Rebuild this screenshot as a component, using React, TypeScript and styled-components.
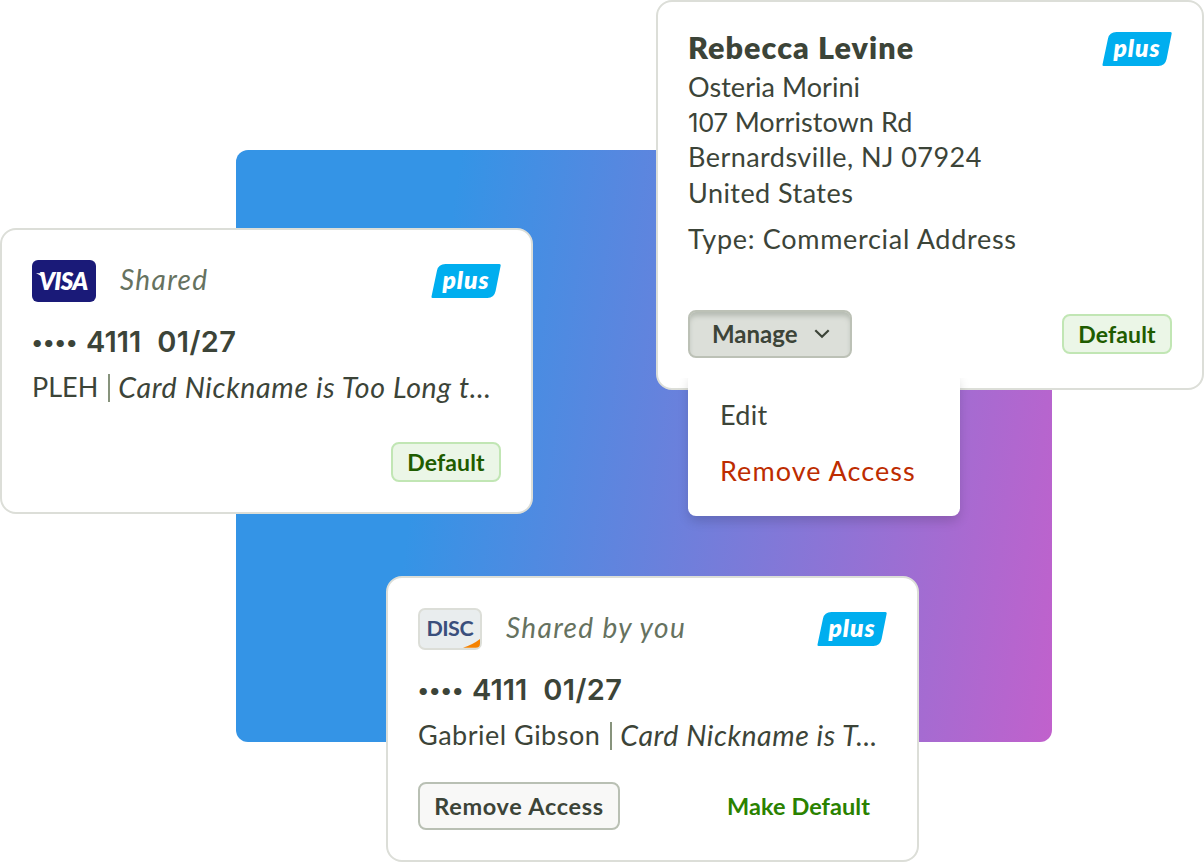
import { ReactNode } from 'react';
import styled, { createGlobalStyle } from 'styled-components';

function PlusBadge() {
  return (
    <BadgeSvg width="70" height="34" viewBox="0 0 70 34">
      <path
        d="M14.5 0H68.4Q70 0 69.7 1.6L64.6 27Q63.1 34 56.5 34H1.7Q.2 34 .5 32.4L6 6.6Q7.4 0 14.5 0Z"
        fill="#00aeef"
      />
      <text x="11.4" y="25" fill="#ffffff" fontSize="24.5" fontStyle="italic" fontWeight="800" letterSpacing="1">
        plus
      </text>
    </BadgeSvg>
  );
}

function VisaLogo() {
  return (
    <svg width="64" height="42" viewBox="0 0 64 42">
      <rect width="64" height="42" rx="6" fill="#1a1a78" />
      <path d="M4 13.2H9Q11.8 13.3 12.4 16.5L13 20Q9.5 15.2 4 13.2Z" fill="#ffffff" />
      <text x="7" y="30.3" fill="#ffffff" fontSize="24" fontStyle="italic" fontWeight="800" letterSpacing="-0.7">
        VISA
      </text>
    </svg>
  );
}

function DiscoverLogo() {
  return (
    <svg width="64" height="42" viewBox="0 0 64 42">
      <rect x="1" y="1" width="62" height="40" rx="6" fill="#e9edee" stroke="#dcded8" strokeWidth="2" />
      <path d="M45 39.8Q55 36.5 62 31V35.5Q62 39.8 57.5 39.8Z" fill="#f58200" />
      <text x="8.4" y="28" fill="#3a4f7c" fontSize="21.5" fontWeight="700" letterSpacing="-0.5">
        DISC
      </text>
    </svg>
  );
}

type PaymentCardProps = {
  logo: ReactNode;
  shared: string;
  owner: ReactNode;
  nickname: ReactNode;
  children: ReactNode;
};

function PaymentCard({ logo, shared, owner, nickname, children }: PaymentCardProps) {
  return (
    <Card>
      <CardHead>
        {logo}
        <SharedText>{shared}</SharedText>
        <PlusBadge />
      </CardHead>
      <CardNumber>
        <Dots>••••</Dots>
        <span>4111</span>
        <Expiry>01/27</Expiry>
      </CardNumber>
      <CardOwner>
        {owner}
        <Divider />
        {nickname}
      </CardOwner>
      <CardFoot>{children}</CardFoot>
    </Card>
  );
}

function AddressCard() {
  return (
    <Card>
      <AddressHead>
        <Name>Rebecca Levine</Name>
        <PlusBadge />
      </AddressHead>
      <AddressLine $spacing={0.05}>Osteria Morini</AddressLine>
      <AddressLine $spacing={0.05}>
        <Digits>107</Digits> Morristown Rd
      </AddressLine>
      <AddressLine $spacing={0.45}>Bernardsville, NJ 07924</AddressLine>
      <AddressLine $spacing={0.45}>United States</AddressLine>
      <AddressType $spacing={0.7}>Type: Commercial Address</AddressType>
      <CardFoot>
        <ManageWrap>
          <ManageButton>
            Manage
            <svg width="16" height="10" viewBox="0 0 16 10" fill="none" stroke="#3c4438" strokeWidth="2.2">
              <path d="M1.3 1.2L8 7.8L14.7 1.2" />
            </svg>
          </ManageButton>
          <Menu>
            <MenuItem $spacing={0.3}>Edit</MenuItem>
            <MenuItem $spacing={1.05} $danger>
              Remove Access
            </MenuItem>
          </Menu>
        </ManageWrap>
        <DefaultTag>Default</DefaultTag>
      </CardFoot>
    </Card>
  );
}

function App() {
  return (
    <Canvas>
      <GlobalStyle />
      <Backdrop />
      <VisaSlot>
        <PaymentCard
          logo={<VisaLogo />}
          shared="Shared"
          owner={<Label $spacing={0}>PLEH</Label>}
          nickname={<Nickname $spacing={0.65}>Card Nickname is Too Long t...</Nickname>}
        >
          <DefaultTag>Default</DefaultTag>
        </PaymentCard>
      </VisaSlot>
      <DiscoverSlot>
        <PaymentCard
          logo={<DiscoverLogo />}
          shared="Shared by you"
          owner={<Label $spacing={0.5}>Gabriel Gibson</Label>}
          nickname={<Nickname $spacing={0.55}>Card Nickname is T...</Nickname>}
        >
          <RemoveButton>Remove Access</RemoveButton>
          <MakeDefault>Make Default</MakeDefault>
        </PaymentCard>
      </DiscoverSlot>
      <AddressSlot>
        <AddressCard />
      </AddressSlot>
    </Canvas>
  );
}

export default App;

const GlobalStyle = createGlobalStyle`
  * {
    box-sizing: border-box;
  }

  body {
    margin: 0;
    background-color: #ffffff;
    color: #3c4438;
    font-family: Lato, 'Liberation Sans', sans-serif;
    font-size: 27px;
    overflow: hidden;
  }

  svg {
    flex: none;
    display: block;
  }

  p {
    margin: 0;
  }

  button {
    font: inherit;
    color: inherit;
  }
`;

/* the cards overlap the backdrop, so they share one grid */
const Canvas = styled.main`
  display: grid;
  width: 1204px;
  height: 862px;
  grid-template-columns: 236px 150px 147px 123px 263px 133px 152px;
  grid-template-rows: 150px 78px 162px 124px 62px 166px 120px;
`;

const Backdrop = styled.div`
  grid-column: 2 / 7;
  grid-row: 2 / 7;
  border-radius: 12px;
  background: linear-gradient(98deg, #3494e6 25%, #c161cc 100%);
`;

const VisaSlot = styled.div`
  display: grid;
  grid-column: 1 / 4;
  grid-row: 3 / 5;
`;

const DiscoverSlot = styled.div`
  display: grid;
  grid-column: 3 / 6;
  grid-row: 6 / 8;
`;

const AddressSlot = styled.div`
  display: grid;
  grid-column: 5 / 8;
  grid-row: 1 / 4;
`;

const Card = styled.section`
  display: flex;
  flex-direction: column;
  min-width: 0;
  padding: 30px;
  border: 2px solid #dcded8;
  border-radius: 16px;
  background-color: #ffffff;
  white-space: nowrap;
`;

const CardHead = styled.header`
  display: flex;
  align-items: center;
  height: 42px;
`;

const SharedText = styled.span`
  margin-left: 24px;
  padding-bottom: 4px;
  color: #66725f;
  font-size: 28px;
  font-style: italic;
  line-height: 36px;
  letter-spacing: 1.35px;
`;

const BadgeSvg = styled.svg`
  margin-left: auto;
  overflow: visible;
`;

const CardNumber = styled.p`
  display: flex;
  align-items: baseline;
  height: 40px;
  margin-top: 20px;
  font-family: Inter, 'Liberation Sans', sans-serif;
  font-size: 29px;
  font-weight: 600;
  line-height: 40px;
`;

const Dots = styled.span`
  width: 54px;
  font-family: Lato, sans-serif;
  font-size: 18px;
  letter-spacing: 1.1px;
  position: relative;
  top: -3px;
`;

const Expiry = styled.span`
  margin-left: 16px;
  letter-spacing: 0.4px;
`;

const CardOwner = styled.p`
  display: flex;
  align-items: center;
  height: 36px;
  margin-top: 8px;
  line-height: 34px;
`;

const Label = styled.span<{ $spacing: number }>`
  padding-bottom: 2px;
  letter-spacing: ${(props) => props.$spacing}px;
`;

const Nickname = styled.em<{ $spacing: number }>`
  padding-bottom: 2px;
  font-size: 28.5px;
  letter-spacing: ${(props) => props.$spacing}px;
`;

const Divider = styled.i`
  width: 2px;
  height: 28px;
  margin: 0 8px 0 10px;
  background-color: #87937c;
`;

const CardFoot = styled.footer`
  display: flex;
  align-items: center;
  justify-content: flex-end;
  margin-top: auto;
`;

const DefaultTag = styled.span`
  width: 110px;
  height: 40px;
  border: 2px solid #c1e6b4;
  border-radius: 8px;
  background-color: #ebf6e7;
  color: #1f5c00;
  font-size: 23px;
  font-weight: 700;
  line-height: 36px;
  letter-spacing: 0.1px;
  text-align: center;
`;

const RemoveButton = styled.button`
  width: 202px;
  height: 48px;
  padding: 0 0 1px;
  border: 2px solid #b9c0b4;
  border-radius: 8px;
  background-color: #f8f8f7;
  font-size: 23.5px;
  font-weight: 700;
  letter-spacing: 0.7px;
`;

const MakeDefault = styled.button`
  height: 48px;
  margin-left: auto;
  padding: 0 17px 1px;
  border: none;
  background: none;
  color: #2a8200;
  font-size: 23.5px;
  font-weight: 700;
  letter-spacing: 0.05px;
`;

const AddressHead = styled.header`
  display: flex;
  align-items: flex-start;
  height: 37px;
`;

const Name = styled.h2`
  margin: 0;
  font-size: 30.5px;
  font-weight: 800;
  line-height: 30px;
  letter-spacing: 1.05px;
`;

const AddressLine = styled.p<{ $spacing: number }>`
  height: 35.2px;
  line-height: 35px;
  letter-spacing: ${(props) => props.$spacing}px;
`;

const AddressType = styled(AddressLine)`
  margin-top: 11px;
`;

const Digits = styled.span`
  font-family: Inter, 'Liberation Sans', sans-serif;
  font-size: 26px;
  letter-spacing: -0.5px;
`;

const ManageWrap = styled.div`
  position: relative;
  margin-right: auto;
`;

const ManageButton = styled.button`
  display: flex;
  align-items: center;
  justify-content: space-between;
  width: 164px;
  height: 48px;
  padding: 0 20px 1px 22px;
  border: 2px solid #bcc1b6;
  border-radius: 8px;
  background-color: #dcdfd9;
  box-shadow: inset 0 5px 5px -1px #b6bcb3;
  font-size: 24px;
  font-weight: 700;
  line-height: 28px;
`;

const Menu = styled.ul`
  position: absolute;
  top: 62px;
  left: 0;
  z-index: 1;
  width: 272px;
  height: 144px;
  margin: 0;
  padding: 15px 32px;
  border-radius: 8px;
  background-color: #ffffff;
  box-shadow: 0 6px 12px -1px rgba(0, 0, 0, 0.16);
  clip-path: inset(6px -20px -30px -20px);
  list-style: none;
`;

const MenuItem = styled.li<{ $spacing: number; $danger?: boolean }>`
  height: 56px;
  color: ${(props) => (props.$danger ? '#bd2c00' : '#3c4438')};
  line-height: 56px;
  letter-spacing: ${(props) => props.$spacing}px;
`;
